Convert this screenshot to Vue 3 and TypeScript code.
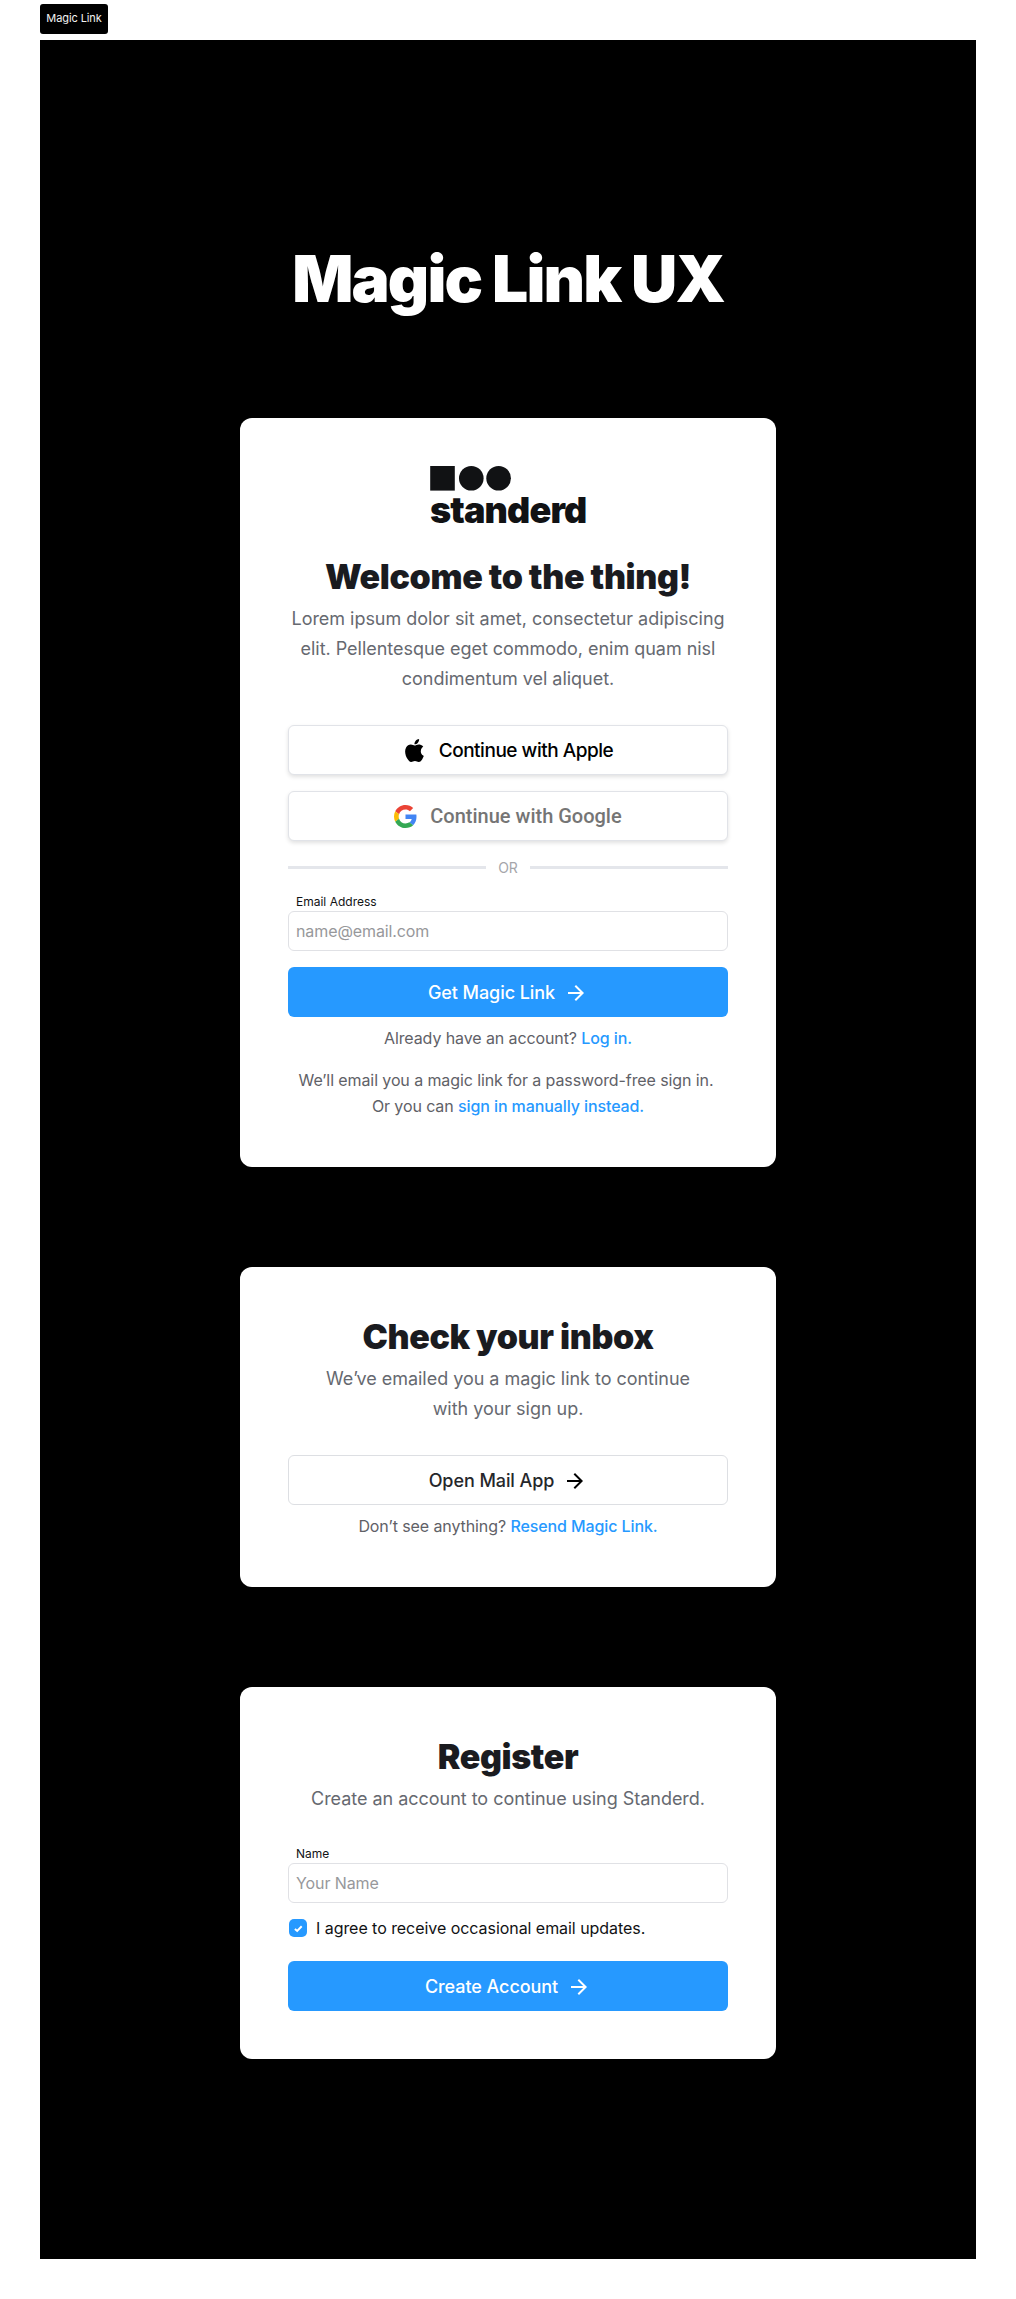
<script setup lang="ts">
import { ref } from 'vue'

const email = ref('')
const name = ref('')
const agreed = ref(true)
const arrow = 'M12 4l-1.41 1.41L16.17 11H4v2h12.17l-5.58 5.59L12 20l8-8z'
</script>

<template>
  <div class="canvas">
    <div class="tag">Magic Link</div>
    <main class="frame">
      <h1 class="title">Magic Link UX</h1>

      <section class="card">
        <div class="logo">
          <svg class="logo-shapes" width="81" height="25" viewBox="0 0 81 25" aria-hidden="true">
            <rect x="0.2" width="24.6" height="24.6" />
            <circle cx="41.3" cy="12.3" r="12.3" />
            <circle cx="68.6" cy="12.3" r="12.3" />
          </svg>
          <span class="logo-word">standerd</span>
        </div>
        <h2 class="heading">Welcome to the thing!</h2>
        <p class="lead">
          Lorem ipsum dolor sit amet, consectetur adipiscing<br />elit. Pellentesque eget commodo, enim quam nisl<br />condimentum vel aliquet.
        </p>
        <button class="btn social apple" type="button">
          <svg width="23" height="23" viewBox="0 0 24 24" aria-hidden="true">
            <path d="M12.152 6.896c-.948 0-2.415-1.078-3.96-1.04-2.04.027-3.91 1.183-4.961 3.014-2.117 3.675-.546 9.103 1.519 12.09 1.013 1.454 2.208 3.09 3.792 3.039 1.52-.065 2.09-.987 3.935-.987 1.831 0 2.35.987 3.96.948 1.637-.026 2.676-1.48 3.676-2.948 1.156-1.688 1.636-3.325 1.662-3.415-.039-.013-3.182-1.221-3.22-4.857-.026-3.04 2.48-4.494 2.597-4.559-1.429-2.09-3.623-2.324-4.39-2.376-2-.156-3.675 1.09-4.61 1.09zM15.53 3.83c.843-1.012 1.4-2.427 1.245-3.83-1.207.052-2.662.805-3.532 1.818-.78.896-1.454 2.338-1.273 3.714 1.338.104 2.715-.688 3.559-1.701" />
          </svg>
          <span>Continue with Apple</span>
        </button>
        <button class="btn social google" type="button">
          <svg width="23" height="23" viewBox="0 0 48 48" aria-hidden="true">
            <path fill="#EA4335" d="M24 9.5c3.54 0 6.71 1.22 9.21 3.6l6.85-6.85C35.9 2.38 30.47 0 24 0 14.62 0 6.51 5.38 2.56 13.22l7.98 6.19C12.43 13.72 17.74 9.5 24 9.5z" />
            <path fill="#4285F4" d="M46.98 24.55c0-1.57-.15-3.09-.38-4.55H24v9.02h12.94c-.58 2.96-2.26 5.48-4.78 7.18l7.73 6c4.51-4.18 7.09-10.36 7.09-17.65z" />
            <path fill="#FBBC05" d="M10.53 28.59c-.48-1.45-.76-2.99-.76-4.59s.27-3.14.76-4.59l-7.98-6.19C.92 16.46 0 20.12 0 24c0 3.88.92 7.54 2.56 10.78l7.97-6.19z" />
            <path fill="#34A853" d="M24 48c6.48 0 11.93-2.13 15.89-5.81l-7.73-6c-2.15 1.45-4.92 2.3-8.16 2.3-6.26 0-11.57-4.22-13.47-9.91l-7.98 6.19C6.51 42.62 14.62 48 24 48z" />
          </svg>
          <span>Continue with Google</span>
        </button>
        <div class="divider"><span>OR</span></div>
        <label class="label" for="email">Email Address</label>
        <input id="email" v-model="email" class="field" type="text" placeholder="name@email.com" />
        <button class="btn primary" type="button">
          <span>Get Magic Link</span>
          <svg width="24" height="24" viewBox="0 0 24 24" aria-hidden="true"><path :d="arrow" /></svg>
        </button>
        <p class="note">Already have an account? <a>Log in.</a></p>
        <p class="note spaced">
          <span class="first-line">We’ll email you a magic link for a password-free sign in.</span><br />Or you can <a>sign in manually instead.</a>
        </p>
      </section>

      <section class="card">
        <h2 class="heading">Check your inbox</h2>
        <p class="lead">We<span class="tight">’</span>ve emailed you a magic link to continue<br />with your sign up.</p>
        <button class="btn outline" type="button">
          <span>Open Mail App</span>
          <svg width="24" height="24" viewBox="0 0 24 24" aria-hidden="true"><path :d="arrow" /></svg>
        </button>
        <p class="note">Don’t see anything? <a>Resend Magic Link.</a></p>
      </section>

      <section class="card">
        <h2 class="heading">Register</h2>
        <p class="lead">Create an account to continue using Standerd.</p>
        <label class="label" for="name">Name</label>
        <input id="name" v-model="name" class="field" type="text" placeholder="Your Name" />
        <div class="agree" @click="agreed = !agreed">
          <span class="box" :class="{ on: agreed }">
            <svg v-if="agreed" width="18" height="18" viewBox="0 0 18 18" aria-hidden="true">
              <path d="M5.9 9.9l2.3 2 4.5-4.6" />
            </svg>
          </span>
          <span>I agree to receive occasional email updates.</span>
        </div>
        <button class="btn primary" type="button">
          <span>Create Account</span>
          <svg width="24" height="24" viewBox="0 0 24 24" aria-hidden="true"><path :d="arrow" /></svg>
        </button>
      </section>
    </main>
  </div>
</template>

<style>
body {
  margin: 0;
  background: #fff;
}
</style>

<style scoped>
.canvas {
  box-sizing: border-box;
  width: 1016px;
  height: 2299px;
  padding: 4px 40px 40px;
  background: #fff;
  font-family: Inter, "Liberation Sans", sans-serif;
}
.tag {
  box-sizing: border-box;
  width: 68px;
  height: 30px;
  margin-bottom: 6px;
  border-radius: 3px;
  background: #000;
  color: #f2f2f2;
  font-size: 11px;
  line-height: 29px;
  letter-spacing: -0.1px;
  text-align: center;
  white-space: nowrap;
}
.frame {
  box-sizing: border-box;
  height: 2219px;
  padding-top: 200px;
  background: #000;
  display: flex;
  flex-direction: column;
  align-items: center;
}
.title {
  margin: 0 0 100px;
  height: 78px;
  line-height: 78px;
  font-size: 64px;
  font-weight: 900;
  letter-spacing: -0.029em;
  color: #fff;
  white-space: nowrap;
}
.card {
  box-sizing: border-box;
  width: 536px;
  margin-bottom: 100px;
  padding: 48px;
  border-radius: 12px;
  background: #fff;
  display: flex;
  flex-direction: column;
  text-align: center;
}
.logo {
  width: 156px;
  height: 89px;
  margin: 0 auto;
  display: flex;
  flex-direction: column;
  align-items: flex-start;
  color: #111214;
}
.logo-shapes {
  display: block;
  fill: currentColor;
}
.logo-word {
  margin-top: -3px;
  font-size: 36px;
  line-height: 44px;
  font-weight: 900;
  letter-spacing: -0.024em;
}
.heading {
  margin: 0 0 6px;
  font-size: 34px;
  line-height: 43px;
  font-weight: 900;
  letter-spacing: -0.0115em;
  color: #1a1b1f;
  white-space: nowrap;
}
.lead {
  margin: 0 0 31px;
  font-size: 18px;
  line-height: 30px;
  letter-spacing: -0.03px;
  color: #666970;
  white-space: nowrap;
}
.tight {
  letter-spacing: -1.5px;
}
.btn {
  box-sizing: border-box;
  width: 100%;
  height: 50px;
  padding: 0;
  border: 0;
  border-radius: 6px;
  display: flex;
  align-items: center;
  justify-content: center;
  font-family: inherit;
  font-size: 18px;
  font-weight: 500;
  letter-spacing: -0.07px;
  white-space: nowrap;
}
.btn svg {
  flex: none;
  fill: currentColor;
}
.primary {
  padding-top: 1px;
  background: #2699ff;
  color: #fff;
  gap: 9px;
}
.outline {
  padding-top: 1px;
  background: #fff;
  border: 1px solid #dddfe3;
  color: #26272b;
  gap: 9px;
}
.outline svg {
  fill: #000;
}
.social {
  border: 1px solid #e1e3e8;
  background: #fff;
  box-shadow: 0 2px 4px rgba(0, 0, 0, 0.12);
  gap: 13px;
}
.apple {
  margin-bottom: 16px;
  color: #000;
  font-size: 19px;
  letter-spacing: -0.025em;
}
.google {
  color: #757575;
  font-family: Roboto, sans-serif;
  font-size: 20px;
  letter-spacing: 0;
}
.divider {
  height: 52px;
  display: flex;
  align-items: center;
  color: #a5a6aa;
  font-size: 14px;
}
.divider span {
  width: 44px;
}
.divider::before,
.divider::after {
  content: "";
  flex: 1;
  height: 3px;
  background: #e4e6eb;
}
.label {
  padding-left: 8px;
  font-size: 12px;
  line-height: 18px;
  text-align: left;
  color: #111214;
}
.field {
  box-sizing: border-box;
  width: 100%;
  height: 40px;
  margin: 0 0 16px;
  padding: 0 7px;
  border: 1px solid #e0e1e5;
  border-radius: 6px;
  background: #fff;
  color: #111214;
  font-family: inherit;
  font-size: 16px;
  letter-spacing: -0.1px;
  outline: none;
}
.field::placeholder {
  color: #97989b;
  opacity: 1;
}
.note {
  margin: 8px 0 0;
  font-size: 16px;
  line-height: 26px;
  letter-spacing: -0.1px;
  color: #5f6167;
  white-space: nowrap;
}
.spaced {
  margin-top: 16px;
}
.first-line {
  margin-right: 4px;
}
.note a {
  color: #2699ff;
  font-weight: 500;
}
.agree {
  height: 26px;
  margin-bottom: 16px;
  padding-left: 1px;
  display: flex;
  align-items: flex-start;
  gap: 9px;
  font-size: 16px;
  line-height: 19px;
  letter-spacing: -0.05px;
  color: #111214;
  white-space: nowrap;
}
.box {
  flex: none;
  box-sizing: border-box;
  width: 18px;
  height: 18px;
  border: 1px solid #dddfe3;
  border-radius: 5px;
  background: #fff;
}
.box.on {
  border: 0;
  background: #2699ff;
}
.box svg {
  display: block;
  fill: none;
  stroke: #fff;
  stroke-width: 2;
}
</style>
